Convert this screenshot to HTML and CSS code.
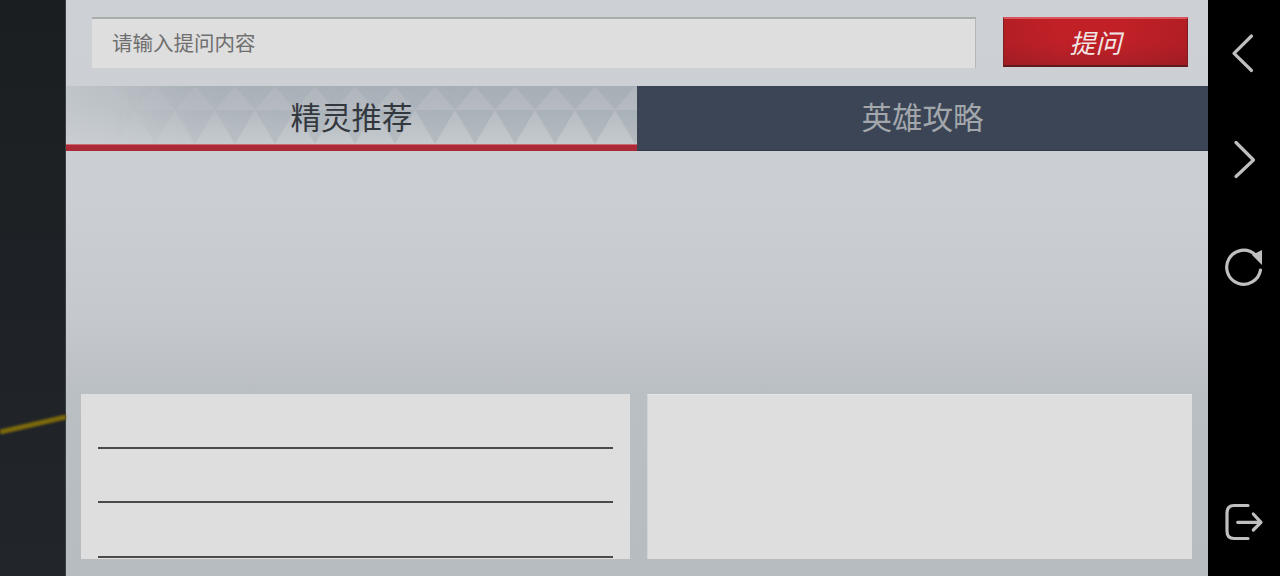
FILE: index.html
```html
<!DOCTYPE html>
<html lang="zh">
<head>
<meta charset="utf-8">
<title>精灵推荐</title>
<link rel="stylesheet" href="styles.css">
</head>
<body>
<div class="app">
  <div class="backdrop">
    <svg class="streak" width="66" height="40" viewBox="0 0 66 40"><path d="M0 31 L66 16" stroke="#7c690c" stroke-width="5" fill="none"/></svg>
  </div>
  <main class="panel">
    <div class="search">
      <div class="field">请输入提问内容</div>
      <button class="ask"><span class="ask-label">提问</span></button>
    </div>
    <div class="tabs">
      <div class="tab tab-active">
        <svg class="tris" width="571" height="58" viewBox="0 0 571 58">
          <defs>
            <pattern id="p1" width="40" height="58" patternUnits="userSpaceOnUse" x="29">
              <path d="M-20 0H20L0 24Z M20 0H60L40 24Z" fill="#8f9ca5" fill-opacity=".24"/>
              <path d="M0 24H40L20 58Z" fill="#8f9ea7" fill-opacity=".3"/>
            </pattern>
            <linearGradient id="fade" x1="0" x2="1" y1="0" y2="0">
              <stop offset=".08" stop-color="#fff" stop-opacity="0"/>
              <stop offset=".3" stop-color="#fff" stop-opacity=".7"/>
              <stop offset=".7" stop-color="#fff"/>
            </linearGradient>
            <mask id="m1"><rect width="571" height="58" fill="url(#fade)"/></mask>
          </defs>
          <rect width="571" height="58" fill="url(#p1)" mask="url(#m1)"/>
        </svg>
        <span class="tab-label">精灵推荐</span>
      </div>
      <div class="tab tab-idle"><span class="tab-label">英雄攻略</span></div>
    </div>
    <div class="cards">
      <section class="card card-list">
        <div class="row"></div>
        <div class="row"></div>
        <div class="row"></div>
      </section>
      <section class="card card-plain"></section>
    </div>
  </main>
  <nav class="rail">
    <div class="rail-top">
      <svg class="ico" width="40" height="44" viewBox="0 0 40 44"><path d="M27.500 5 L10 22.300 L27.500 39.500"/></svg>
      <svg class="ico" width="40" height="44" viewBox="0 0 40 44"><path d="M12 4.500 L29.500 22 L12 38.500"/></svg>
      <svg class="ico" width="40" height="44" viewBox="0 0 40 44"><path d="M36.500 25 A17 17 0 1 1 31 9.500"/><path class="fill" d="M38 5 L38 20 L28 10 Z"/></svg>
    </div>
    <svg class="ico" width="40" height="44" viewBox="0 0 40 44"><path d="M24 5.500 H10 Q3 5.500 3 13 V31 Q3 38.500 10 38.500 H24"/><path d="M13.700 22.300 H37 M29.300 14 L37 22.300 L29.300 30"/></svg>
  </nav>
</div>
</body>
</html>
```
FILE: styles.css
```css
html, body { margin: 0; padding: 0; }
body { width: 1280px; height: 576px; overflow: hidden; background: #000; font-family: "Noto Sans CJK SC", "Liberation Sans", sans-serif; }
.app { display: flex; width: 1280px; height: 576px; }
.backdrop { width: 65px; flex: none; background: linear-gradient(180deg, #1b1e21 0%, #1e2226 50%, #22262b 100%); border-right: 1px solid #3a3f44; position: relative; }
.streak { position: absolute; left: 0; top: 401px; filter: blur(1px); }
.panel { flex: 1; display: flex; flex-direction: column; background: linear-gradient(180deg, #cdd1d5 0%, #cbcfd4 35%, #c5c9ce 55%, #babfc4 68%, #b6bcc0 100%); }
.search { display: flex; align-items: flex-start; padding: 17px 20px 0 26px; height: 86px; box-sizing: border-box; }
.field { width: 884px; height: 51px; box-sizing: border-box; background: #dedede; border-top: 2px solid #a9aeac; border-right: 1px solid #b2b6b6; padding-left: 20px; line-height: 47px; font-size: 20.500px; color: #6f6f6f; }
.ask { margin-left: 27px; width: 185px; height: 50px; padding: 0; border: 1px solid #7c2025; border-top: 2px solid #d9555b; border-bottom: 2px solid #5f1a1e; background: linear-gradient(90deg, rgba(120,20,25,.18) 0%, rgba(120,20,25,0) 30%, rgba(120,20,25,0) 65%, rgba(120,20,25,.2) 100%), linear-gradient(180deg, #c22027 0%, #bf2027 55%, #a91f26 100%); display: flex; align-items: center; justify-content: center; font-family: inherit; }
.ask-label { color: #f1e6e6; font-size: 26px; font-style: italic; line-height: 1; }
.tabs { display: flex; height: 65px; }
.tab { flex: 1; box-sizing: border-box; display: flex; align-items: center; justify-content: center; position: relative; font-size: 30.500px; }
.tab-label { position: relative; line-height: 1; margin-top: 2px; }
.tab-active { background: linear-gradient(90deg, rgba(205,209,213,.55) 0%, rgba(205,209,213,0) 22%), linear-gradient(180deg, #afb6bc 0%, #b4bac0 35%, #c5cace 100%); border-bottom: 6px solid #ab2a38; color: #33383e; }
.tab-active::after { content: ""; position: absolute; left: 0; right: 0; bottom: 0; height: 1px; background: #cc6a72; }
.tab-idle { background: #3b4556; color: #a3a7ab; padding-bottom: 6px; border-bottom: 1px solid #333b49; }
.tris { position: absolute; left: 0; top: 0; }
.cards { display: flex; flex: 1; align-items: flex-start; padding: 243px 16px 0 15px; gap: 17px; }
.card { height: 165px; background: #dedede; box-sizing: border-box; }
.card-list { width: 549px; padding: 0 17px; display: flex; flex-direction: column; }
.row { height: 54.700px; box-sizing: border-box; border-bottom: 2px solid #4a4a4a; }
.card-plain { width: 545px; border-top: 1px solid #e6e6e6; border-left: 1px solid #d0d3d5; }
.rail { width: 72px; flex: none; background: #000; display: flex; flex-direction: column; align-items: flex-start; justify-content: space-between; padding: 31px 0 32px 16px; box-sizing: border-box; }
.rail-top { display: flex; flex-direction: column; gap: 63px; }
.ico { display: block; fill: none; stroke: #bfbfbf; stroke-width: 3.200; stroke-linecap: round; stroke-linejoin: round; overflow: visible; }
.ico .fill { fill: #bfbfbf; stroke: none; }
```
